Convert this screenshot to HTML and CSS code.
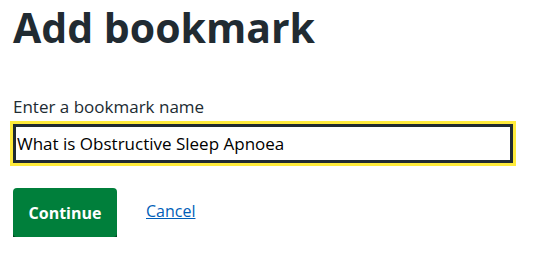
FILE: index.html
```html
<!DOCTYPE html>
<html lang="en">
<head>
    <meta charset="UTF-8">
    <meta name="viewport" content="width=device-width, initial-scale=1.0">
    <title>Add bookmark</title>
    <link rel="stylesheet" href="styles.css">
</head>
<body>
    <h1>Add bookmark</h1>

    <form class="bookmark-form">
        <div class="form-group">
            <label for="bookmarkName">Enter a bookmark name</label>
            <input type="text" id="bookmarkName" class="input-focus" value="What is Obstructive Sleep Apnoea">
        </div>

        <div class="actions">
            <button type="button">Continue</button>
            <a href="#" class="cancel">Cancel</a>
        </div>
    </form>
</body>
</html>
```

FILE: styles.css
```css
body {
    font-family: "Open Sans", Arial, sans-serif;
    color: #212b32;
    margin: 0;
    padding: 0 13px;
    background-color: #fff;
}
h1 {
    font-size: 41px;
    font-weight: 700;
    line-height: 56px;
    margin: 0;
    margin-top: -1px;
}
.form-group {
    margin-top: 40px;
}
label {
    display: block;
    font-size: 17px;
    line-height: 24px;
    margin-bottom: 5px;
}
input[type="text"] {
    display: block;
    width: 500px;
    height: 39px;
    box-sizing: border-box;
    padding: 0 2px;
    font-family: "Open Sans", Arial, sans-serif;
    font-size: 17px;
    color: #000;
    border: 2px solid #212b32;
    box-shadow: inset 0 0 0 1px #212b32;
    outline: 3px solid #ffeb3b;
    border-radius: 0;
}
.actions {
    display: flex;
    align-items: center;
    gap: 29px;
    margin-top: 25px;
}
button {
    background-color: #007f3b;
    color: white;
    font-family: "Open Sans", Arial, sans-serif;
    font-weight: 700;
    font-size: 16px;
    width: 104px;
    height: 49px;
    border: none;
    border-radius: 4px;
    box-shadow: 0 4px 0 #00401e;
    cursor: pointer;
    padding: 0;
}
.cancel {
    color: #005eb8;
    font-size: 16px;
    text-decoration: underline;
    margin-top: -4px;
}
```
